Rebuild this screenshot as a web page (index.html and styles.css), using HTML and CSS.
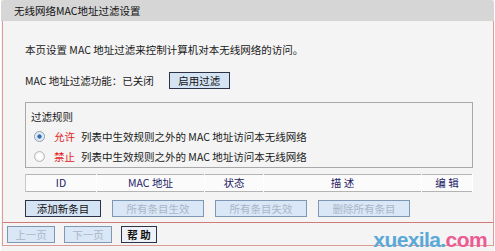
FILE: index.html
```html
<!DOCTYPE html>
<html>
<head>
    <meta charset="utf-8">
    <title>无线网络MAC地址过滤设置</title>
    <link rel="stylesheet" href="styles.css">
</head>
<body>
    <div class="page">
        <div class="title">无线网络MAC地址过滤设置</div>
        <div class="panel">
            <div class="content">
                <div class="intro">本页设置 MAC 地址过滤来控制计算机对本无线网络的访问。</div>
                <div class="status-row">
                    <span>MAC 地址过滤功能：已关闭</span>
                    <button type="button" class="btn btn-enable">启用过滤</button>
                </div>
                <div class="rules">
                    <div class="rules-title">过滤规则</div>
                    <div class="rule-row">
                        <span class="radio checked"></span>
                        <span class="rule-key">允许</span>
                        <span>列表中生效规则之外的 MAC 地址访问本无线网络</span>
                    </div>
                    <div class="rule-row">
                        <span class="radio"></span>
                        <span class="rule-key">禁止</span>
                        <span>列表中生效规则之外的 MAC 地址访问本无线网络</span>
                    </div>
                </div>
                <table class="list">
                    <tr>
                        <th class="col-id">ID</th>
                        <th class="col-mac">MAC 地址</th>
                        <th class="col-state">状态</th>
                        <th class="col-desc">描 述</th>
                        <th class="col-edit">编 辑</th>
                    </tr>
                </table>
                <div class="actions">
                    <button type="button" class="btn btn-add">添加新条目</button>
                    <button type="button" class="btn btn-wide" disabled>所有条目生效</button>
                    <button type="button" class="btn btn-wide" disabled>所有条目失效</button>
                    <button type="button" class="btn btn-wide" disabled>删除所有条目</button>
                </div>
            </div>
            <div class="footer">
                <button type="button" class="btn btn-page" disabled>上一页</button>
                <button type="button" class="btn btn-page" disabled>下一页</button>
                <button type="button" class="btn btn-help">帮 助</button>
            </div>
        </div>
        <div class="watermark">xuexila.<span class="wm-com">com</span></div>
    </div>
</body>
</html>
```

FILE: styles.css
```css
/* General */
body, html {
    margin: 0;
    padding: 0;
    background-color: #ffffff;
}
body {
    font-family: 'Noto Sans CJK SC', 'DejaVu Sans', sans-serif;
    font-size: 10.5px;
    color: #1a1a1a;
}
.page {
    position: relative;
    width: 493px;
    height: 251px;
    margin-left: 1px;
    background-color: #f4f4f4;
}
/* Title bar */
.title {
    height: 21px;
    line-height: 21px;
    padding-left: 13px;
    background-color: #d6d6d6;
    border-radius: 3px 3px 0 0;
    color: #111111;
}
/* Bordered panel */
.panel {
    border-left: 1px solid #dc9c96;
    border-right: 1px solid #dc9c96;
    border-bottom: 1px solid #dc9c96;
    margin-left: 1px;
}
.content {
    padding: 21px 0 5px 22px;
}
.intro {
    height: 16px;
    line-height: 16px;
}
.status-row {
    display: flex;
    align-items: center;
    gap: 15px;
    margin-top: 14px;
    height: 17px;
}
/* Buttons */
.btn {
    height: 17px;
    padding: 0;
    font-family: inherit;
    font-size: 10.5px;
    line-height: 15px;
    color: #111111;
    background-color: #d5e4f4;
    border: 1px solid #2d3346;
    cursor: pointer;
}
.btn:disabled {
    color: #a9b6c8;
    border-color: #7e98b4;
    background-color: #dae7f6;
}
.btn-enable {
    width: 61px;
}
.btn-add {
    width: 76px;
}
.btn-wide {
    width: 92px;
}
.btn-page {
    width: 48px;
}
.btn-help {
    width: 36px;
    font-weight: bold;
    background-color: #eef2f8;
}
/* Rules box */
.rules {
    width: 448px;
    box-sizing: border-box;
    margin-top: 13px;
    padding: 5px 0 1px 5px;
    border: 1px solid #a9a9a9;
    background-color: #f4f4f4;
}
.rules-title {
    height: 18px;
    line-height: 18px;
}
.rule-row {
    display: flex;
    align-items: center;
    height: 20px;
    padding-left: 3px;
}
.radio {
    width: 9px;
    height: 9px;
    border: 1px solid #b8b8b8;
    border-radius: 50%;
    background: radial-gradient(circle, #ffffff 40%, #dcdcdc 100%);
    margin-right: 9px;
    position: relative;
}
.radio.checked {
    border-color: #8e9cae;
    background: radial-gradient(circle, #2f6fb8 28%, #d6e2ee 38%, #ffffff 100%);
}
.rule-key {
    color: #e02020;
    margin-right: 6px;
}
/* List table */
.list {
    width: 448px;
    margin-top: 6px;
    border-collapse: collapse;
    background-color: #fbfbfb;
    border: 1px solid #b4b4b4;
}
.list th {
    height: 16px;
    padding: 0;
    font-weight: normal;
    color: #1e2266;
    border-left: 1px solid #c8c8c8;
    border-right: 1px solid #ffffff;
    line-height: 16px;
}
.col-id { width: 70px; }
.col-mac { width: 107px; }
.col-state { width: 58px; }
.col-desc { width: 157px; }
/* Actions */
.actions {
    display: flex;
    gap: 11px;
    margin-top: 8px;
}
/* Footer */
.footer {
    display: flex;
    gap: 9px;
    border-top: 1px solid #cf7a76;
    padding: 3px 0 2px 4px;
}
/* Watermark */
.watermark {
    position: absolute;
    right: 7px;
    bottom: -1px;
    font-family: 'Liberation Sans', Arial, sans-serif;
    font-size: 21px;
    font-weight: bold;
    letter-spacing: -0.6px;
    color: #5aa9d8;
    line-height: 24px;
}
.wm-com {
    color: #ec5b93;
}
```
